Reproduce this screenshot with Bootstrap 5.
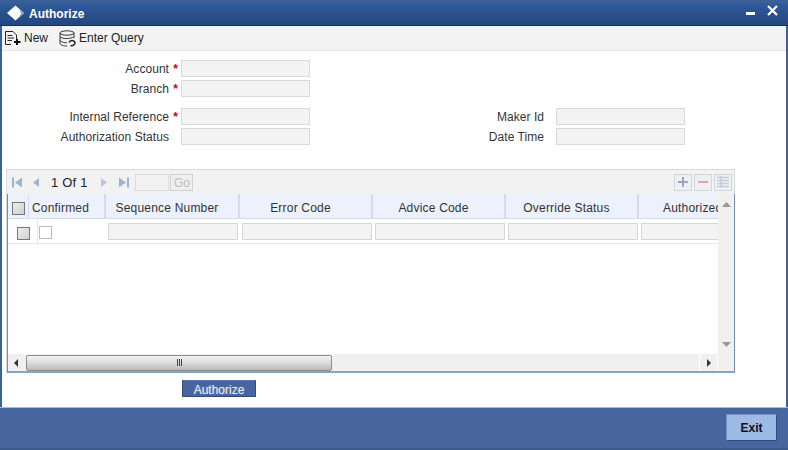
<!DOCTYPE html>
<html lang="en">
<head>
<meta charset="utf-8">
<title>Authorize</title>
<link href="https://cdn.jsdelivr.net/npm/bootstrap@5.3.0/dist/css/bootstrap.min.css" rel="stylesheet">
<style>
html,body{height:450px;overflow:hidden;background:#fff}
body{font-family:"Liberation Sans",Arial,sans-serif;font-size:12px;color:#333;line-height:14px}
.win{width:788px;height:450px;background:#fff;border-left:2px solid #3d6097;border-right:2px solid #3d6097;display:flex;flex-direction:column}
.ttl{height:26px;flex:none;margin:0 -2px;padding:0 6px 0 7px;background:linear-gradient(#3b6098 0,#3b6098 3px,#2f5a9c 4px,#23477f 24px);border-bottom:1px solid #14305c;color:#fff;font-weight:700;display:flex;align-items:center;gap:5px}
.ttl-name{font-size:12px;padding-top:2px}
.tbar{height:25px;flex:none;background:#f3f3f3;border-bottom:1px solid #e6e6e6;display:flex;align-items:center;padding-left:2px;color:#222}
.tb-new{margin:0 11px 0 1px}
.tb-eq{margin-left:3px}
.frm{height:356px;flex:none;padding:9px 4px 0 4px;position:relative}
.frow{display:flex;height:17px;margin-bottom:3px}
.frow.gap8{margin-bottom:11px}
.frow.tail{margin-bottom:24px}
.lab1{width:163px;text-align:right;color:#333;flex:none;line-height:18px;letter-spacing:.05px;white-space:nowrap}
.req{width:12px;flex:none;color:#d40000;font-weight:700;text-align:center;line-height:19px;padding-left:1px}
.inp{width:129px;height:17px;flex:none;background:#f3f3f3;border:1px solid #d9d9d9}
.lab2{width:234px;text-align:right;flex:none;line-height:18px;letter-spacing:.05px}
.inp.r{margin-left:12px}
.panel{width:729px;height:204px;border-top:1px solid #d5dbe3;border-left:1px solid #d5dbe3;display:flex;flex-direction:column}
.nav-strip{height:24px;flex:none;background:#f2f2f2;border-right:1px solid #d5dbe3;display:flex;align-items:center;padding-left:3px;color:#222;font-size:13px}
.pg{margin:0 12px 0 10px;position:relative;top:1px;word-spacing:.5px}
.ni{display:block;flex:none}
.ni-prev{margin-left:4px}
.ni-last{margin-left:7px}
.pgbox{width:34px;height:17px;background:#f2f2f2;border:1px solid #dcdcdc;margin-left:2px}
.gobtn{width:23px;height:17px;margin-left:1px;border:1px solid #d2d2d2;color:#bdbdbd;font-size:12px;text-align:center;line-height:16px;background:#efefef}
.acts{margin-left:auto;margin-right:2px;display:flex;gap:2px}
.ab{width:18px;height:17px;border:1px solid #cfd6e2;background:#f0f0f0;display:flex;align-items:center;justify-content:center}
.gridwrap{flex:1;display:flex;flex-direction:column;border-left:1px solid #6d8fb7;border-right:1px solid #6d8fb7;border-bottom:2px solid #86a4c6;width:728px;background:#fff;min-height:0}
.gmain{flex:1;display:flex;min-height:0}
.gtab{width:710px;flex:none;overflow:hidden}
.ghead,.grow-a{display:flex}
.ghead{height:25px;background:#edf1fb;border-bottom:1px solid #d3dbe8}
.grow-a{height:25px;border-bottom:1px solid #dfe6ef}
.gc{flex:none;height:24px;text-align:center;line-height:28px;border-right:2px solid #d4dbea;color:#333;padding-right:10px;letter-spacing:.2px;white-space:nowrap}
.gc:last-child{border-right:0}
.w0{width:21px;padding:0;border-right-width:1px}.w1{width:77px;padding-right:12px}.w2{width:134px}.w3{width:133px}.w4{width:79px;text-align:left;padding:0 0 0 24px;overflow:hidden}
.cb{display:block;width:13px;height:13px;border:1px solid #777;background:linear-gradient(135deg,#eee,#cfcfcf)}
.cb-h{margin:8px 0 0 4px}
.cell0{width:30px;flex:none;border-right:1px solid #e3e9f2;padding:8px 0 0 9px}
.cb2{width:13px;height:13px;border:1px solid #bbb;background:#fff;margin:7px 0 0 1px;flex:none}
.cfcell{width:70px;flex:none}
.cinp{width:130px;height:17px;background:#f3f3f3;border:1px solid #d6d6d6;flex:none;margin:4px 3px 0 0}
.cinp.c1{margin-right:4px}
.vs{width:16px;flex:none;background:#f0f0f0;display:flex;flex-direction:column;justify-content:space-between;align-items:center;padding:8px 0 7px}
.hs{height:17px;flex:none;background:#f0f0f0;display:flex;align-items:center}
.hleft{width:18px;flex:none;display:flex;justify-content:center;padding-right:3px}
.thumb{width:306px;height:16px;flex:none;border:1px solid #8d8d8d;border-radius:2px;background:linear-gradient(#f2f2f2,#dcdcdc 50%,#b9b9b9);display:flex;align-items:center;justify-content:center;gap:1px}
.thumb i{width:1px;height:7px;background:#444;display:block}
.hright{margin-left:auto;width:19px;border-left:1px solid #fff;border-right:1px solid #fff;height:17px;margin-right:16px;display:flex;align-items:center;justify-content:center}
.authwrap{padding:7px 0 0 176px}
.authbtn{display:block;width:74px;height:17px;background:#47669f;border:1px solid #2f4a7b;border-top-color:#5a78ad;border-radius:0;color:#dfe6f2;font-size:12px;line-height:18px;padding:0;text-align:center;text-shadow:0 0 1px #fff8}
.foot{flex:1;margin:0 -2px;background:#47669f;border-top:1px solid #a9bdd8;border-bottom:2px solid #3d5a8c;display:flex;justify-content:flex-end;padding:6px 11px 0 0}
.exitbtn{width:51px;height:27px;padding:0;background:#9dbae4;border:1px solid #6f8fbd;border-right-color:#2f4a7b;border-bottom-color:#2f4a7b;border-radius:0;color:#111;font-weight:700;font-size:12px;line-height:24px}
</style>
</head>
<body>
<div class="win">
  <div class="ttl">
    <svg width="17" height="16" viewBox="0 0 17 16"><path d="M8.500 .5 17 8 8.500 15.500 0 8Z" fill="#fff"/><path d="M12 3.600 17 8 12 12.400 14 8Z" fill="#8fa6c8"/></svg>
    <span class="ttl-name">Authorize</span>
    <svg class="ms-auto" width="38" height="17" viewBox="0 0 38 17"><rect x="2" y="8" width="9" height="3" fill="#fff"/><path d="M24 2 33 11M33 2 24 11" stroke="#fff" stroke-width="2.200"/></svg>
  </div>
  <div class="tbar">
    <svg width="19" height="18" viewBox="0 0 19 18"><path d="M1.500 2.500H9L12.500 6V11M7 15.500H1.500V2.500M3.500 6.500H8.500M3.500 9H10M3.500 11.500H8" fill="none" stroke="#222" stroke-width="1"/><path d="M13 10V16M10 13H16.500" stroke="#111" stroke-width="2"/></svg>
    <span class="tb-new">New</span>
    <svg width="17" height="17" viewBox="0 0 17 17"><ellipse cx="8" cy="3" rx="7" ry="2.200" fill="none" stroke="#333"/><path d="M1 3V13.500C1 15 4.500 16 8 16M15 3V8M1 6.800C3 9 11 9.300 15 6.800M1 10.500C3 12.500 6 12.800 8 12.800" fill="none" stroke="#333"/><path d="M10 12.500C11 9.500 15.500 10 16 12.500C16 15 13.500 16 11.500 15.500" fill="none" stroke="#222" stroke-width="1.500"/></svg>
    <span class="tb-eq">Enter Query</span>
  </div>
  <div class="frm">
    <div class="frow"><div class="lab1">Account</div><div class="req">*</div><div class="inp"></div></div>
    <div class="frow gap8"><div class="lab1">Branch</div><div class="req">*</div><div class="inp"></div></div>
    <div class="frow"><div class="lab1">Internal Reference</div><div class="req">*</div><div class="inp"></div><div class="lab2">Maker Id</div><div class="inp r"></div></div>
    <div class="frow tail"><div class="lab1">Authorization Status</div><div class="req"></div><div class="inp"></div><div class="lab2">Date Time</div><div class="inp r"></div></div>

    <div class="panel">
      <div class="nav-strip">
        <svg class="ni" width="16" height="13" viewBox="0 0 16 13"><path d="M2 1.500H4V11.500H2ZM12 1.500V11.500L5 6.500Z" fill="#9db3cf"/></svg>
        <svg class="ni ni-prev" width="11" height="13" viewBox="0 0 11 13"><path d="M9 2V11L3 6.500Z" fill="#9db3cf"/></svg>
        <span class="pg">1 Of 1</span>
        <svg class="ni" width="11" height="13" viewBox="0 0 11 13"><path d="M2 2V11L8 6.500Z" fill="#b8c8dc"/></svg>
        <svg class="ni ni-last" width="16" height="13" viewBox="0 0 16 13"><path d="M2 1.500V11.500L9 6.500ZM10 1.500H12V11.500H10Z" fill="#9db3cf"/></svg>
        <div class="pgbox"></div>
        <div class="gobtn">Go</div>
        <div class="acts">
          <div class="ab"><svg width="14" height="14" viewBox="0 0 14 14"><path d="M7 2V12M2 7H12" stroke="#93a8cc" stroke-width="2"/></svg></div>
          <div class="ab"><svg width="14" height="14" viewBox="0 0 14 14"><path d="M2 7H12" stroke="#e3a3a3" stroke-width="2"/></svg></div>
          <div class="ab"><svg width="14" height="14" viewBox="0 0 14 14"><path d="M1 2.500H13M1 5.500H13M1 8.500H13M1 11.500H13M5 1V13" stroke="#c3cddc" stroke-width="1.500"/></svg></div>
        </div>
      </div>
      <div class="gridwrap">
        <div class="gmain">
          <div class="gtab">
            <div class="ghead">
              <div class="gc w0"><span class="cb cb-h"></span></div>
              <div class="gc w1">Confirmed</div>
              <div class="gc w2">Sequence Number</div>
              <div class="gc w3">Error Code</div>
              <div class="gc w3">Advice Code</div>
              <div class="gc w3">Override Status</div>
              <div class="gc w4">Authorized</div>
            </div>
            <div class="grow-a">
              <div class="cell0"><span class="cb"></span></div>
              <div class="cfcell"><div class="cb2"></div></div>
              <div class="cinp c1"></div><div class="cinp"></div><div class="cinp"></div><div class="cinp"></div><div class="cinp"></div>
            </div>
          </div>
          <div class="vs">
            <svg width="9" height="5" viewBox="0 0 9 5"><path d="M4.500 0 9 5H0Z" fill="#999"/></svg>
            <svg width="9" height="5" viewBox="0 0 9 5"><path d="M0 0H9L4.500 5Z" fill="#999"/></svg>
          </div>
        </div>
        <div class="hs">
          <div class="hleft"><svg width="4" height="8" viewBox="0 0 4 8"><path d="M4 0V8L0 4Z" fill="#333"/></svg></div>
          <div class="thumb"><i></i><i></i><i></i></div>
          <div class="hright"><svg width="4" height="8" viewBox="0 0 4 8"><path d="M0 0V8L4 4Z" fill="#333"/></svg></div>
        </div>
      </div>
    </div>
    <div class="authwrap"><button type="button" class="btn authbtn">Authorize</button></div>
  </div>
  <div class="foot"><button type="button" class="btn exitbtn">Exit</button></div>
</div>
<script src="https://cdn.jsdelivr.net/npm/bootstrap@5.3.0/dist/js/bootstrap.bundle.min.js"></script>
</body>
</html>
